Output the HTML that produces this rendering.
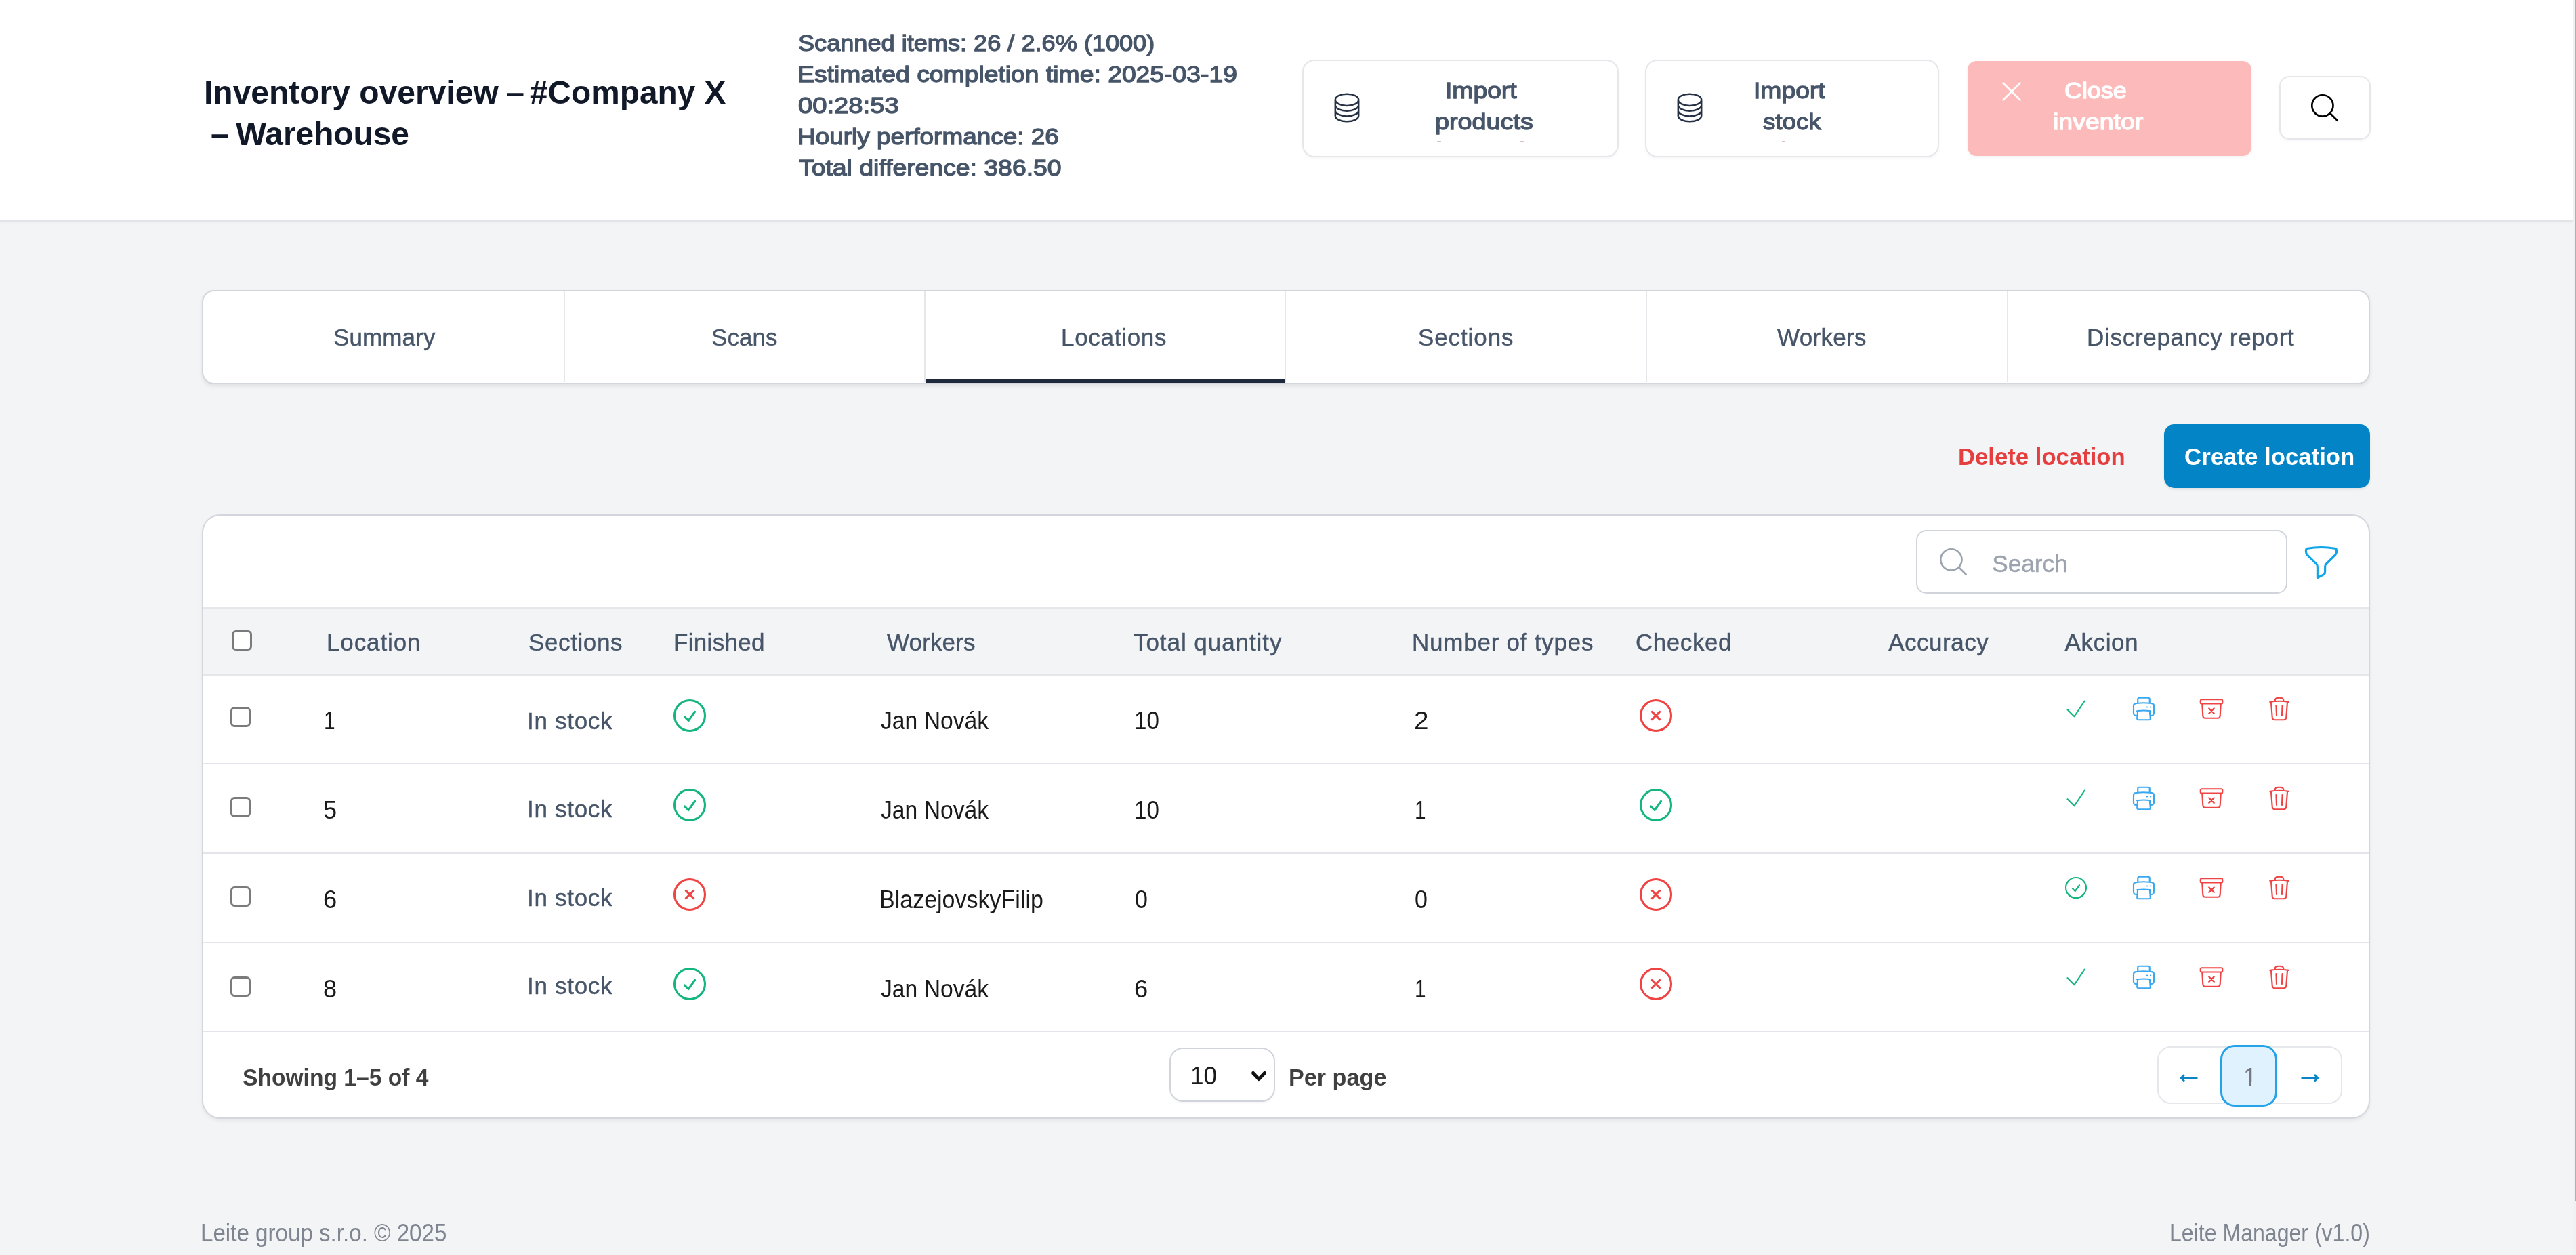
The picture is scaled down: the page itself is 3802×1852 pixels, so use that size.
<!DOCTYPE html>
<html lang="en"><head><meta charset="utf-8"><title>Inventory overview</title>
<style>
html,body{margin:0;padding:0}
body{width:3802px;height:1852px;overflow:hidden;background:#f3f4f6;position:relative;font-family:"Liberation Sans", sans-serif}
.t{position:absolute;white-space:nowrap;font-family:"Liberation Sans", sans-serif}
.tw{position:absolute;left:0;top:0;width:3802px;height:1852px;will-change:transform}
.a{position:absolute;box-sizing:border-box}
svg{position:absolute;overflow:visible}
</style></head><body>
<div class="a" style="left:0px;top:0px;width:3797px;height:327px;background:#fff;border-bottom:3px solid #e2e4ea;box-shadow:0 2px 4px rgba(0,0,0,.03)"></div>
<div class="a" style="left:3797px;top:0px;width:5px;height:1852px;background:#f1f1f1"></div>
<div class="a" style="left:3799.5px;top:0px;width:2.5px;height:1773px;background:#b0b0b0"></div>
<div class="a" style="left:1922px;top:87.5px;width:467px;height:144.5px;background:#fff;border:2.5px solid #e5e7eb;border-radius:18px;box-shadow:0 2px 4px rgba(0,0,0,.04)"></div>
<div class="a" style="left:2427.5px;top:87.5px;width:434.5px;height:144.5px;background:#fff;border:2.5px solid #e5e7eb;border-radius:18px;box-shadow:0 2px 4px rgba(0,0,0,.04)"></div>
<div class="a" style="left:2904px;top:89.5px;width:418.5px;height:140.5px;background:#fcbaba;border-radius:13px;box-shadow:0 2px 4px rgba(0,0,0,.05)"></div>
<div class="a" style="left:3363.5px;top:111.5px;width:135px;height:94.5px;background:#fff;border:2.5px solid #e5e7eb;border-radius:15px;box-shadow:0 2px 4px rgba(0,0,0,.04)"></div>
<svg style="left:1963px;top:134px" width="50" height="50" viewBox="0 0 24 24" fill="none" stroke="#263143" stroke-width="1.2" stroke-linecap="round" stroke-linejoin="round"><path d="M20.25 6.375c0 2.278-3.694 4.125-8.25 4.125S3.75 8.653 3.75 6.375m16.5 0c0-2.278-3.694-4.125-8.25-4.125S3.75 4.097 3.75 6.375m16.5 0v11.25c0 2.278-3.694 4.125-8.25 4.125s-8.25-1.847-8.25-4.125V6.375m16.5 0v3.75m-16.5-3.75v3.75m16.5 0v3.75C20.25 16.153 16.556 18 12 18s-8.25-1.847-8.25-4.125v-3.75m16.5 0c0 2.278-3.694 4.125-8.25 4.125s-8.25-1.847-8.25-4.125"/></svg>
<svg style="left:2469px;top:134px" width="50" height="50" viewBox="0 0 24 24" fill="none" stroke="#263143" stroke-width="1.2" stroke-linecap="round" stroke-linejoin="round"><path d="M20.25 6.375c0 2.278-3.694 4.125-8.25 4.125S3.75 8.653 3.75 6.375m16.5 0c0-2.278-3.694-4.125-8.25-4.125S3.75 4.097 3.75 6.375m16.5 0v11.25c0 2.278-3.694 4.125-8.25 4.125s-8.25-1.847-8.25-4.125V6.375m16.5 0v3.75m-16.5-3.75v3.75m16.5 0v3.75C20.25 16.153 16.556 18 12 18s-8.25-1.847-8.25-4.125v-3.75m16.5 0c0 2.278-3.694 4.125-8.25 4.125s-8.25-1.847-8.25-4.125"/></svg>
<svg style="left:2944px;top:110px" width="50" height="50" viewBox="0 0 24 24" fill="none" stroke="#fff" stroke-width="1.25" stroke-linecap="round" stroke-linejoin="round"><path d="M6 18 18 6M6 6l12 12"/></svg>
<svg style="left:3406px;top:134px" width="50" height="50" viewBox="0 0 24 24" fill="none" stroke="#000" stroke-width="1.3" stroke-linecap="round" stroke-linejoin="round"><path d="m21 21-5.197-5.197m0 0A7.5 7.5 0 1 0 5.196 5.196a7.5 7.5 0 0 0 10.607 10.607Z"/></svg>
<div class="a" style="left:2121px;top:207.5px;width:6px;height:1.5px;background:#d7bccb;border-radius:1px"></div>
<div class="a" style="left:2243px;top:207.5px;width:6px;height:1.5px;background:#d7bccb;border-radius:1px"></div>
<div class="a" style="left:2630px;top:207.5px;width:5px;height:1.5px;background:#d7bccb;border-radius:1px"></div>
<div class="a" style="left:297.5px;top:427.5px;width:3200.5px;height:139px;background:#fff;border:2.5px solid #d3d6dc;border-radius:18px;box-shadow:0 3px 6px rgba(0,0,0,.08)"></div>
<div class="a" style="left:832px;top:430px;width:2px;height:134px;background:#e5e7eb"></div>
<div class="a" style="left:1364px;top:430px;width:2px;height:134px;background:#e5e7eb"></div>
<div class="a" style="left:1896px;top:430px;width:2px;height:134px;background:#e5e7eb"></div>
<div class="a" style="left:2429px;top:430px;width:2px;height:134px;background:#e5e7eb"></div>
<div class="a" style="left:2962px;top:430px;width:2px;height:134px;background:#e5e7eb"></div>
<div class="a" style="left:1365.5px;top:559.5px;width:531px;height:5px;background:#1e293b"></div>
<div class="a" style="left:3194px;top:626px;width:304px;height:93.5px;background:#0284c7;border-radius:15px;box-shadow:0 2px 4px rgba(0,0,0,.08)"></div>
<div class="a" style="left:297.5px;top:759px;width:3200.5px;height:891.5px;background:#fff;border:2.5px solid #d3d6dc;border-radius:27px;box-shadow:0 3px 5px rgba(0,0,0,.06)"></div>
<div class="a" style="left:2828px;top:782px;width:548px;height:94px;background:#fff;border:2.5px solid #d1d5db;border-radius:15px"></div>
<svg style="left:2858px;top:804px" width="50" height="50" viewBox="0 0 24 24" fill="none" stroke="#9ca3af" stroke-width="1.25" stroke-linecap="round" stroke-linejoin="round"><path d="m21 21-5.197-5.197m0 0A7.5 7.5 0 1 0 5.196 5.196a7.5 7.5 0 0 0 10.607 10.607Z"/></svg>
<svg style="left:3396px;top:800px" width="60" height="60" viewBox="0 0 24 24" fill="none" stroke="#0ea5e9" stroke-width="1.25" stroke-linecap="round" stroke-linejoin="round"><path d="M12 3c2.755 0 5.455.232 8.083.678.533.09.917.556.917 1.096v1.044a2.25 2.25 0 0 1-.659 1.591l-5.432 5.432a2.25 2.25 0 0 0-.659 1.591v2.927a2.25 2.25 0 0 1-1.244 2.013L9.75 21v-6.568a2.25 2.25 0 0 0-.659-1.591L3.659 7.409A2.25 2.25 0 0 1 3 5.818V4.774c0-.54.384-1.006.917-1.096A48.32 48.32 0 0 1 12 3Z"/></svg>
<div class="a" style="left:300px;top:896px;width:3196px;height:100.5px;background:#f3f4f6;border-top:2.5px solid #e5e7eb;border-bottom:2.5px solid #e5e7eb"></div>
<div class="a" style="left:342px;top:930px;width:30px;height:30px;background:#fff;border:3px solid #7b7b7b;border-radius:6px"></div>
<div class="a" style="left:300px;top:1126px;width:3196px;height:2px;background:#e3e5ea"></div>
<div class="a" style="left:340px;top:1043px;width:30px;height:30px;background:#fff;border:3px solid #7b7b7b;border-radius:6px"></div>
<div class="a" style="left:300px;top:1258px;width:3196px;height:2px;background:#e3e5ea"></div>
<div class="a" style="left:340px;top:1175.5px;width:30px;height:30px;background:#fff;border:3px solid #7b7b7b;border-radius:6px"></div>
<div class="a" style="left:300px;top:1390px;width:3196px;height:2px;background:#e3e5ea"></div>
<div class="a" style="left:340px;top:1308px;width:30px;height:30px;background:#fff;border:3px solid #7b7b7b;border-radius:6px"></div>
<div class="a" style="left:300px;top:1521px;width:3196px;height:2px;background:#e3e5ea"></div>
<div class="a" style="left:340px;top:1440.5px;width:30px;height:30px;background:#fff;border:3px solid #7b7b7b;border-radius:6px"></div>
<svg style="left:988px;top:1026px" width="60" height="60" viewBox="0 0 24 24" fill="none" stroke="#14b57e" stroke-width="1.25" stroke-linecap="round" stroke-linejoin="round"><path d="M9 12.75 11.25 15 15 9.75M21 12a9 9 0 1 1-18 0 9 9 0 0 1 18 0Z"/></svg>
<svg style="left:2414px;top:1026px" width="60" height="60" viewBox="0 0 24 24" fill="none" stroke="#ef4444" stroke-width="1.25" stroke-linecap="round" stroke-linejoin="round"><path d="m9.75 9.75 4.5 4.5m0-4.5-4.5 4.5M21 12a9 9 0 1 1-18 0 9 9 0 0 1 18 0Z"/></svg>
<svg style="left:3043.5px;top:1025.5px" width="40" height="40" viewBox="0 0 24 24" fill="none" stroke="#14b57e" stroke-width="1.3" stroke-linecap="round" stroke-linejoin="round"><path d="m4.5 12.75 6 6 9-13.5"/></svg>
<svg style="left:3144px;top:1025.5px" width="40" height="40" viewBox="0 0 24 24" fill="none" stroke="#38a8f0" stroke-width="1.3" stroke-linecap="round" stroke-linejoin="round"><path d="M6.72 13.829c-.24.03-.48.062-.72.096m.72-.096a42.415 42.415 0 0 1 10.56 0m-10.56 0L6.34 18m10.94-4.171c.24.03.48.062.72.096m-.72-.096L17.66 18m0 0 .229 2.523a1.125 1.125 0 0 1-1.12 1.227H7.231c-.662 0-1.18-.568-1.12-1.227L6.34 18m11.318 0h1.091A2.25 2.25 0 0 0 21 15.75V9.456c0-1.081-.768-2.015-1.837-2.175a48.055 48.055 0 0 0-1.913-.247M6.34 18H5.25A2.25 2.25 0 0 1 3 15.75V9.456c0-1.081.768-2.015 1.837-2.175a48.041 48.041 0 0 1 1.913-.247m10.5 0a48.536 48.536 0 0 0-10.5 0m10.5 0V3.375c0-.621-.504-1.125-1.125-1.125h-8.25c-.621 0-1.125.504-1.125 1.125v3.659M18 10.5h.008v.008H18V10.5Zm-3 0h.008v.008H15V10.5Z"/></svg>
<svg style="left:3244px;top:1025.5px" width="40" height="40" viewBox="0 0 24 24" fill="none" stroke="#ef4444" stroke-width="1.3" stroke-linecap="round" stroke-linejoin="round"><path d="m20.25 7.5-.625 10.632a2.25 2.25 0 0 1-2.247 2.118H6.622a2.25 2.25 0 0 1-2.247-2.118L3.75 7.5m6 4.125 2.25 2.25m0 0 2.25 2.25M12 13.875l2.25-2.25M12 13.875l-2.25 2.25M3.375 7.5h17.25c.621 0 1.125-.504 1.125-1.125v-1.5c0-.621-.504-1.125-1.125-1.125H3.375c-.621 0-1.125.504-1.125 1.125v1.5c0 .621.504 1.125 1.125 1.125Z"/></svg>
<svg style="left:3344px;top:1025.5px" width="40" height="40" viewBox="0 0 24 24" fill="none" stroke="#ef4444" stroke-width="1.3" stroke-linecap="round" stroke-linejoin="round"><path d="m14.74 9-.346 9m-4.788 0L9.26 9m9.968-3.21c.342.052.682.107 1.022.166m-1.022-.165L18.16 19.673a2.25 2.25 0 0 1-2.244 2.077H8.084a2.25 2.25 0 0 1-2.244-2.077L4.772 5.79m14.456 0a48.108 48.108 0 0 0-3.478-.397m-12 .562c.34-.059.68-.114 1.022-.165m0 0a48.11 48.11 0 0 1 3.478-.397m7.5 0v-.916c0-1.18-.91-2.164-2.09-2.201a51.964 51.964 0 0 0-3.32 0c-1.18.037-2.09 1.022-2.09 2.201v.916m7.5 0a48.667 48.667 0 0 0-7.5 0"/></svg>
<svg style="left:988px;top:1158px" width="60" height="60" viewBox="0 0 24 24" fill="none" stroke="#14b57e" stroke-width="1.25" stroke-linecap="round" stroke-linejoin="round"><path d="M9 12.75 11.25 15 15 9.75M21 12a9 9 0 1 1-18 0 9 9 0 0 1 18 0Z"/></svg>
<svg style="left:2414px;top:1158px" width="60" height="60" viewBox="0 0 24 24" fill="none" stroke="#14b57e" stroke-width="1.25" stroke-linecap="round" stroke-linejoin="round"><path d="M9 12.75 11.25 15 15 9.75M21 12a9 9 0 1 1-18 0 9 9 0 0 1 18 0Z"/></svg>
<svg style="left:3043.5px;top:1157.5px" width="40" height="40" viewBox="0 0 24 24" fill="none" stroke="#14b57e" stroke-width="1.3" stroke-linecap="round" stroke-linejoin="round"><path d="m4.5 12.75 6 6 9-13.5"/></svg>
<svg style="left:3144px;top:1157.5px" width="40" height="40" viewBox="0 0 24 24" fill="none" stroke="#38a8f0" stroke-width="1.3" stroke-linecap="round" stroke-linejoin="round"><path d="M6.72 13.829c-.24.03-.48.062-.72.096m.72-.096a42.415 42.415 0 0 1 10.56 0m-10.56 0L6.34 18m10.94-4.171c.24.03.48.062.72.096m-.72-.096L17.66 18m0 0 .229 2.523a1.125 1.125 0 0 1-1.12 1.227H7.231c-.662 0-1.18-.568-1.12-1.227L6.34 18m11.318 0h1.091A2.25 2.25 0 0 0 21 15.75V9.456c0-1.081-.768-2.015-1.837-2.175a48.055 48.055 0 0 0-1.913-.247M6.34 18H5.25A2.25 2.25 0 0 1 3 15.75V9.456c0-1.081.768-2.015 1.837-2.175a48.041 48.041 0 0 1 1.913-.247m10.5 0a48.536 48.536 0 0 0-10.5 0m10.5 0V3.375c0-.621-.504-1.125-1.125-1.125h-8.25c-.621 0-1.125.504-1.125 1.125v3.659M18 10.5h.008v.008H18V10.5Zm-3 0h.008v.008H15V10.5Z"/></svg>
<svg style="left:3244px;top:1157.5px" width="40" height="40" viewBox="0 0 24 24" fill="none" stroke="#ef4444" stroke-width="1.3" stroke-linecap="round" stroke-linejoin="round"><path d="m20.25 7.5-.625 10.632a2.25 2.25 0 0 1-2.247 2.118H6.622a2.25 2.25 0 0 1-2.247-2.118L3.75 7.5m6 4.125 2.25 2.25m0 0 2.25 2.25M12 13.875l2.25-2.25M12 13.875l-2.25 2.25M3.375 7.5h17.25c.621 0 1.125-.504 1.125-1.125v-1.5c0-.621-.504-1.125-1.125-1.125H3.375c-.621 0-1.125.504-1.125 1.125v1.5c0 .621.504 1.125 1.125 1.125Z"/></svg>
<svg style="left:3344px;top:1157.5px" width="40" height="40" viewBox="0 0 24 24" fill="none" stroke="#ef4444" stroke-width="1.3" stroke-linecap="round" stroke-linejoin="round"><path d="m14.74 9-.346 9m-4.788 0L9.26 9m9.968-3.21c.342.052.682.107 1.022.166m-1.022-.165L18.16 19.673a2.25 2.25 0 0 1-2.244 2.077H8.084a2.25 2.25 0 0 1-2.244-2.077L4.772 5.79m14.456 0a48.108 48.108 0 0 0-3.478-.397m-12 .562c.34-.059.68-.114 1.022-.165m0 0a48.11 48.11 0 0 1 3.478-.397m7.5 0v-.916c0-1.18-.91-2.164-2.09-2.201a51.964 51.964 0 0 0-3.32 0c-1.18.037-2.09 1.022-2.09 2.201v.916m7.5 0a48.667 48.667 0 0 0-7.5 0"/></svg>
<svg style="left:988px;top:1290px" width="60" height="60" viewBox="0 0 24 24" fill="none" stroke="#ef4444" stroke-width="1.25" stroke-linecap="round" stroke-linejoin="round"><path d="m9.75 9.75 4.5 4.5m0-4.5-4.5 4.5M21 12a9 9 0 1 1-18 0 9 9 0 0 1 18 0Z"/></svg>
<svg style="left:2414px;top:1290px" width="60" height="60" viewBox="0 0 24 24" fill="none" stroke="#ef4444" stroke-width="1.25" stroke-linecap="round" stroke-linejoin="round"><path d="m9.75 9.75 4.5 4.5m0-4.5-4.5 4.5M21 12a9 9 0 1 1-18 0 9 9 0 0 1 18 0Z"/></svg>
<svg style="left:3043.5px;top:1289.5px" width="40" height="40" viewBox="0 0 24 24" fill="none" stroke="#14b57e" stroke-width="1.3" stroke-linecap="round" stroke-linejoin="round"><path d="M9 12.75 11.25 15 15 9.75M21 12a9 9 0 1 1-18 0 9 9 0 0 1 18 0Z"/></svg>
<svg style="left:3144px;top:1289.5px" width="40" height="40" viewBox="0 0 24 24" fill="none" stroke="#38a8f0" stroke-width="1.3" stroke-linecap="round" stroke-linejoin="round"><path d="M6.72 13.829c-.24.03-.48.062-.72.096m.72-.096a42.415 42.415 0 0 1 10.56 0m-10.56 0L6.34 18m10.94-4.171c.24.03.48.062.72.096m-.72-.096L17.66 18m0 0 .229 2.523a1.125 1.125 0 0 1-1.12 1.227H7.231c-.662 0-1.18-.568-1.12-1.227L6.34 18m11.318 0h1.091A2.25 2.25 0 0 0 21 15.75V9.456c0-1.081-.768-2.015-1.837-2.175a48.055 48.055 0 0 0-1.913-.247M6.34 18H5.25A2.25 2.25 0 0 1 3 15.75V9.456c0-1.081.768-2.015 1.837-2.175a48.041 48.041 0 0 1 1.913-.247m10.5 0a48.536 48.536 0 0 0-10.5 0m10.5 0V3.375c0-.621-.504-1.125-1.125-1.125h-8.25c-.621 0-1.125.504-1.125 1.125v3.659M18 10.5h.008v.008H18V10.5Zm-3 0h.008v.008H15V10.5Z"/></svg>
<svg style="left:3244px;top:1289.5px" width="40" height="40" viewBox="0 0 24 24" fill="none" stroke="#ef4444" stroke-width="1.3" stroke-linecap="round" stroke-linejoin="round"><path d="m20.25 7.5-.625 10.632a2.25 2.25 0 0 1-2.247 2.118H6.622a2.25 2.25 0 0 1-2.247-2.118L3.75 7.5m6 4.125 2.25 2.25m0 0 2.25 2.25M12 13.875l2.25-2.25M12 13.875l-2.25 2.25M3.375 7.5h17.25c.621 0 1.125-.504 1.125-1.125v-1.5c0-.621-.504-1.125-1.125-1.125H3.375c-.621 0-1.125.504-1.125 1.125v1.5c0 .621.504 1.125 1.125 1.125Z"/></svg>
<svg style="left:3344px;top:1289.5px" width="40" height="40" viewBox="0 0 24 24" fill="none" stroke="#ef4444" stroke-width="1.3" stroke-linecap="round" stroke-linejoin="round"><path d="m14.74 9-.346 9m-4.788 0L9.26 9m9.968-3.21c.342.052.682.107 1.022.166m-1.022-.165L18.16 19.673a2.25 2.25 0 0 1-2.244 2.077H8.084a2.25 2.25 0 0 1-2.244-2.077L4.772 5.79m14.456 0a48.108 48.108 0 0 0-3.478-.397m-12 .562c.34-.059.68-.114 1.022-.165m0 0a48.11 48.11 0 0 1 3.478-.397m7.5 0v-.916c0-1.18-.91-2.164-2.09-2.201a51.964 51.964 0 0 0-3.32 0c-1.18.037-2.09 1.022-2.09 2.201v.916m7.5 0a48.667 48.667 0 0 0-7.5 0"/></svg>
<svg style="left:988px;top:1422px" width="60" height="60" viewBox="0 0 24 24" fill="none" stroke="#14b57e" stroke-width="1.25" stroke-linecap="round" stroke-linejoin="round"><path d="M9 12.75 11.25 15 15 9.75M21 12a9 9 0 1 1-18 0 9 9 0 0 1 18 0Z"/></svg>
<svg style="left:2414px;top:1422px" width="60" height="60" viewBox="0 0 24 24" fill="none" stroke="#ef4444" stroke-width="1.25" stroke-linecap="round" stroke-linejoin="round"><path d="m9.75 9.75 4.5 4.5m0-4.5-4.5 4.5M21 12a9 9 0 1 1-18 0 9 9 0 0 1 18 0Z"/></svg>
<svg style="left:3043.5px;top:1421.5px" width="40" height="40" viewBox="0 0 24 24" fill="none" stroke="#14b57e" stroke-width="1.3" stroke-linecap="round" stroke-linejoin="round"><path d="m4.5 12.75 6 6 9-13.5"/></svg>
<svg style="left:3144px;top:1421.5px" width="40" height="40" viewBox="0 0 24 24" fill="none" stroke="#38a8f0" stroke-width="1.3" stroke-linecap="round" stroke-linejoin="round"><path d="M6.72 13.829c-.24.03-.48.062-.72.096m.72-.096a42.415 42.415 0 0 1 10.56 0m-10.56 0L6.34 18m10.94-4.171c.24.03.48.062.72.096m-.72-.096L17.66 18m0 0 .229 2.523a1.125 1.125 0 0 1-1.12 1.227H7.231c-.662 0-1.18-.568-1.12-1.227L6.34 18m11.318 0h1.091A2.25 2.25 0 0 0 21 15.75V9.456c0-1.081-.768-2.015-1.837-2.175a48.055 48.055 0 0 0-1.913-.247M6.34 18H5.25A2.25 2.25 0 0 1 3 15.75V9.456c0-1.081.768-2.015 1.837-2.175a48.041 48.041 0 0 1 1.913-.247m10.5 0a48.536 48.536 0 0 0-10.5 0m10.5 0V3.375c0-.621-.504-1.125-1.125-1.125h-8.25c-.621 0-1.125.504-1.125 1.125v3.659M18 10.5h.008v.008H18V10.5Zm-3 0h.008v.008H15V10.5Z"/></svg>
<svg style="left:3244px;top:1421.5px" width="40" height="40" viewBox="0 0 24 24" fill="none" stroke="#ef4444" stroke-width="1.3" stroke-linecap="round" stroke-linejoin="round"><path d="m20.25 7.5-.625 10.632a2.25 2.25 0 0 1-2.247 2.118H6.622a2.25 2.25 0 0 1-2.247-2.118L3.75 7.5m6 4.125 2.25 2.25m0 0 2.25 2.25M12 13.875l2.25-2.25M12 13.875l-2.25 2.25M3.375 7.5h17.25c.621 0 1.125-.504 1.125-1.125v-1.5c0-.621-.504-1.125-1.125-1.125H3.375c-.621 0-1.125.504-1.125 1.125v1.5c0 .621.504 1.125 1.125 1.125Z"/></svg>
<svg style="left:3344px;top:1421.5px" width="40" height="40" viewBox="0 0 24 24" fill="none" stroke="#ef4444" stroke-width="1.3" stroke-linecap="round" stroke-linejoin="round"><path d="m14.74 9-.346 9m-4.788 0L9.26 9m9.968-3.21c.342.052.682.107 1.022.166m-1.022-.165L18.16 19.673a2.25 2.25 0 0 1-2.244 2.077H8.084a2.25 2.25 0 0 1-2.244-2.077L4.772 5.79m14.456 0a48.108 48.108 0 0 0-3.478-.397m-12 .562c.34-.059.68-.114 1.022-.165m0 0a48.11 48.11 0 0 1 3.478-.397m7.5 0v-.916c0-1.18-.91-2.164-2.09-2.201a51.964 51.964 0 0 0-3.32 0c-1.18.037-2.09 1.022-2.09 2.201v.916m7.5 0a48.667 48.667 0 0 0-7.5 0"/></svg>
<div class="a" style="left:1726px;top:1546px;width:156px;height:79.5px;background:#fff;border:2.5px solid #d1d5db;border-radius:20px;box-shadow:0 2px 3px rgba(0,0,0,.04)"></div>
<svg style="left:1840px;top:1575px" width="36" height="26" viewBox="0 0 36 26" fill="none" stroke="#111" stroke-width="5" stroke-linecap="round" stroke-linejoin="round"><path d="M9.5 8.5 18 17.5 26.5 8.5"/></svg>
<div class="a" style="left:3183.5px;top:1543.5px;width:273px;height:85px;background:#fff;border:2.5px solid #e5e7eb;border-radius:20px"></div>
<div class="a" style="left:3277px;top:1541.5px;width:84px;height:91px;background:#e0f2fe;border:3px solid #25a3e8;border-radius:21px"></div>
<svg style="left:3210px;top:1578px" width="40" height="26" viewBox="0 0 40 26" fill="none" stroke="#0b84c6" stroke-width="2.7" stroke-linecap="butt" stroke-linejoin="miter"><path d="M33.5 12.8H9M14 8 9 12.8 14 17.6"/></svg>
<svg style="left:3390px;top:1578px" width="40" height="26" viewBox="0 0 40 26" fill="none" stroke="#0b84c6" stroke-width="2.7" stroke-linecap="butt" stroke-linejoin="miter"><path d="M6.5 12.8H31M26 8 31 12.8 26 17.6"/></svg>
<div class="tw">
<div class="t" style="left:301.04px;top:111.50px;font-size:48.5px;line-height:48.5px;font-weight:700;color:#111827;letter-spacing:0.000px;transform:scaleX(0.9894);transform-origin:0 0;">Inventory overview</div>
<div class="t" style="left:747.00px;top:111.50px;font-size:48.5px;line-height:48.5px;font-weight:700;color:#111827;letter-spacing:0.000px;">–</div>
<div class="t" style="left:782.00px;top:111.50px;font-size:48.5px;line-height:48.5px;font-weight:700;color:#111827;letter-spacing:0.000px;transform:scaleX(0.9849);transform-origin:0 0;">#Company X</div>
<div class="t" style="left:311.00px;top:173.00px;font-size:48.5px;line-height:48.5px;font-weight:700;color:#111827;letter-spacing:0.000px;">–</div>
<div class="t" style="left:348.00px;top:173.00px;font-size:48.5px;line-height:48.5px;font-weight:700;color:#111827;letter-spacing:0.000px;transform:scaleX(0.9859);transform-origin:0 0;">Warehouse</div>
<div class="t" style="left:1177.91px;top:47.05px;font-size:33.3px;line-height:33.3px;font-weight:400;color:#475569;letter-spacing:0.000px;transform:scaleX(1.0852);transform-origin:0 0;-webkit-text-stroke:1.3px #475569;">Scanned items: 26 / 2.6% (1000)</div>
<div class="t" style="left:1176.76px;top:93.05px;font-size:33.3px;line-height:33.3px;font-weight:400;color:#475569;letter-spacing:0.000px;transform:scaleX(1.1202);transform-origin:0 0;-webkit-text-stroke:1.3px #475569;">Estimated completion time: 2025-03-19</div>
<div class="t" style="left:1177.85px;top:139.05px;font-size:33.3px;line-height:33.3px;font-weight:400;color:#475569;letter-spacing:0.000px;transform:scaleX(1.1476);transform-origin:0 0;-webkit-text-stroke:1.3px #475569;">00:28:53</div>
<div class="t" style="left:1176.78px;top:185.05px;font-size:33.3px;line-height:33.3px;font-weight:400;color:#475569;letter-spacing:0.000px;transform:scaleX(1.1088);transform-origin:0 0;-webkit-text-stroke:1.3px #475569;">Hourly performance: 26</div>
<div class="t" style="left:1179.00px;top:231.05px;font-size:33.3px;line-height:33.3px;font-weight:400;color:#475569;letter-spacing:0.000px;transform:scaleX(1.1216);transform-origin:0 0;-webkit-text-stroke:1.3px #475569;">Total difference: 386.50</div>
<div class="t" style="left:2132.61px;top:117.35px;font-size:33.3px;line-height:33.3px;font-weight:400;color:#475569;letter-spacing:0.000px;transform:scaleX(1.1196);transform-origin:0 0;-webkit-text-stroke:1.3px #475569;">Import</div>
<div class="t" style="left:2117.73px;top:163.35px;font-size:33.3px;line-height:33.3px;font-weight:400;color:#475569;letter-spacing:0.000px;transform:scaleX(1.1339);transform-origin:0 0;-webkit-text-stroke:1.3px #475569;">products</div>
<div class="t" style="left:2587.61px;top:117.35px;font-size:33.3px;line-height:33.3px;font-weight:400;color:#475569;letter-spacing:0.000px;transform:scaleX(1.1196);transform-origin:0 0;-webkit-text-stroke:1.3px #475569;">Import</div>
<div class="t" style="left:2602.00px;top:163.35px;font-size:33.3px;line-height:33.3px;font-weight:400;color:#475569;letter-spacing:0.000px;transform:scaleX(1.1017);transform-origin:0 0;-webkit-text-stroke:1.3px #475569;">stock</div>
<div class="t" style="left:3046.93px;top:117.35px;font-size:33.3px;line-height:33.3px;font-weight:400;color:#fff;letter-spacing:0.000px;transform:scaleX(1.0765);transform-origin:0 0;-webkit-text-stroke:1.3px #fff;">Close</div>
<div class="t" style="left:3029.75px;top:162.85px;font-size:33.3px;line-height:33.3px;font-weight:400;color:#fff;letter-spacing:0.000px;transform:scaleX(1.1257);transform-origin:0 0;-webkit-text-stroke:1.3px #fff;">inventor</div>
<div class="t" style="left:492.00px;top:479.77px;font-size:35px;line-height:35px;font-weight:400;color:#475569;letter-spacing:0.126px;-webkit-text-stroke:0.45px #475569;">Summary</div>
<div class="t" style="left:1050.00px;top:479.77px;font-size:35px;line-height:35px;font-weight:400;color:#475569;letter-spacing:0.056px;-webkit-text-stroke:0.45px #475569;">Scans</div>
<div class="t" style="left:1566.00px;top:479.77px;font-size:35px;line-height:35px;font-weight:400;color:#475569;letter-spacing:0.709px;-webkit-text-stroke:0.45px #475569;">Locations</div>
<div class="t" style="left:2093.00px;top:479.77px;font-size:35px;line-height:35px;font-weight:400;color:#475569;letter-spacing:0.894px;-webkit-text-stroke:0.45px #475569;">Sections</div>
<div class="t" style="left:2623.00px;top:479.77px;font-size:35px;line-height:35px;font-weight:400;color:#475569;letter-spacing:0.309px;-webkit-text-stroke:0.45px #475569;">Workers</div>
<div class="t" style="left:3080.00px;top:479.77px;font-size:35px;line-height:35px;font-weight:400;color:#475569;letter-spacing:0.706px;-webkit-text-stroke:0.45px #475569;">Discrepancy report</div>
<div class="t" style="left:2890.22px;top:656.20px;font-size:35px;line-height:35px;font-weight:700;color:#e53e3e;letter-spacing:0.000px;transform:scaleX(0.9912);transform-origin:0 0;">Delete location</div>
<div class="t" style="left:3224.01px;top:656.20px;font-size:35px;line-height:35px;font-weight:700;color:#fff;letter-spacing:0.000px;transform:scaleX(0.9942);transform-origin:0 0;">Create location</div>
<div class="t" style="left:2940.20px;top:813.77px;font-size:35.2px;line-height:35.2px;font-weight:400;color:#9ca3af;letter-spacing:-0.024px;-webkit-text-stroke:0.45px #9ca3af;">Search</div>
<div class="t" style="left:482.00px;top:929.77px;font-size:35px;line-height:35px;font-weight:400;color:#475569;letter-spacing:0.877px;-webkit-text-stroke:0.45px #475569;">Location</div>
<div class="t" style="left:780.00px;top:929.77px;font-size:35px;line-height:35px;font-weight:400;color:#475569;letter-spacing:0.608px;-webkit-text-stroke:0.45px #475569;">Sections</div>
<div class="t" style="left:994.00px;top:929.77px;font-size:35px;line-height:35px;font-weight:400;color:#475569;letter-spacing:0.310px;-webkit-text-stroke:0.45px #475569;">Finished</div>
<div class="t" style="left:1309.00px;top:929.77px;font-size:35px;line-height:35px;font-weight:400;color:#475569;letter-spacing:0.143px;-webkit-text-stroke:0.45px #475569;">Workers</div>
<div class="t" style="left:1673.00px;top:929.77px;font-size:35px;line-height:35px;font-weight:400;color:#475569;letter-spacing:0.943px;-webkit-text-stroke:0.45px #475569;">Total quantity</div>
<div class="t" style="left:2084.00px;top:929.77px;font-size:35px;line-height:35px;font-weight:400;color:#475569;letter-spacing:0.766px;-webkit-text-stroke:0.45px #475569;">Number of types</div>
<div class="t" style="left:2414.00px;top:929.77px;font-size:35px;line-height:35px;font-weight:400;color:#475569;letter-spacing:0.555px;-webkit-text-stroke:0.45px #475569;">Checked</div>
<div class="t" style="left:2787.20px;top:929.77px;font-size:35px;line-height:35px;font-weight:400;color:#475569;letter-spacing:0.510px;-webkit-text-stroke:0.45px #475569;">Accuracy</div>
<div class="t" style="left:3047.60px;top:929.77px;font-size:35px;line-height:35px;font-weight:400;color:#475569;letter-spacing:0.563px;-webkit-text-stroke:0.45px #475569;">Akcion</div>
<div class="t" style="left:478.47px;top:1046.00px;font-size:36px;line-height:36px;font-weight:400;color:#1a1a1a;letter-spacing:0.000px;transform:scaleX(0.8284);transform-origin:0 0;">1</div>
<div class="t" style="left:778.00px;top:1045.58px;font-size:35px;line-height:35px;font-weight:400;color:#475569;letter-spacing:0.700px;-webkit-text-stroke:0.45px #475569;">In stock</div>
<div class="t" style="left:1300.00px;top:1046.00px;font-size:36px;line-height:36px;font-weight:400;color:#1a1a1a;letter-spacing:0.000px;transform:scaleX(0.9354);transform-origin:0 0;">Jan Novák</div>
<div class="t" style="left:1674.22px;top:1046.00px;font-size:36px;line-height:36px;font-weight:400;color:#1a1a1a;letter-spacing:0.000px;transform:scaleX(0.9201);transform-origin:0 0;">10</div>
<div class="t" style="left:2087.06px;top:1046.00px;font-size:36px;line-height:36px;font-weight:400;color:#1a1a1a;letter-spacing:0.000px;transform:scaleX(1.0741);transform-origin:0 0;">2</div>
<div class="t" style="left:477.08px;top:1177.80px;font-size:36px;line-height:36px;font-weight:400;color:#1a1a1a;letter-spacing:0.000px;transform:scaleX(1.0053);transform-origin:0 0;">5</div>
<div class="t" style="left:778.00px;top:1175.98px;font-size:35px;line-height:35px;font-weight:400;color:#475569;letter-spacing:0.700px;-webkit-text-stroke:0.45px #475569;">In stock</div>
<div class="t" style="left:1300.00px;top:1177.80px;font-size:36px;line-height:36px;font-weight:400;color:#1a1a1a;letter-spacing:0.000px;transform:scaleX(0.9354);transform-origin:0 0;">Jan Novák</div>
<div class="t" style="left:1674.22px;top:1177.80px;font-size:36px;line-height:36px;font-weight:400;color:#1a1a1a;letter-spacing:0.000px;transform:scaleX(0.9201);transform-origin:0 0;">10</div>
<div class="t" style="left:2088.41px;top:1177.80px;font-size:36px;line-height:36px;font-weight:400;color:#1a1a1a;letter-spacing:0.000px;transform:scaleX(0.8258);transform-origin:0 0;">1</div>
<div class="t" style="left:477.08px;top:1309.60px;font-size:36px;line-height:36px;font-weight:400;color:#1a1a1a;letter-spacing:0.000px;transform:scaleX(1.0093);transform-origin:0 0;">6</div>
<div class="t" style="left:778.00px;top:1306.78px;font-size:35px;line-height:35px;font-weight:400;color:#475569;letter-spacing:0.700px;-webkit-text-stroke:0.45px #475569;">In stock</div>
<div class="t" style="left:1298.13px;top:1309.60px;font-size:36px;line-height:36px;font-weight:400;color:#1a1a1a;letter-spacing:0.000px;transform:scaleX(0.9445);transform-origin:0 0;">BlazejovskyFilip</div>
<div class="t" style="left:1675.06px;top:1309.60px;font-size:36px;line-height:36px;font-weight:400;color:#1a1a1a;letter-spacing:0.000px;transform:scaleX(0.9444);transform-origin:0 0;">0</div>
<div class="t" style="left:2088.06px;top:1309.60px;font-size:36px;line-height:36px;font-weight:400;color:#1a1a1a;letter-spacing:0.000px;transform:scaleX(0.9444);transform-origin:0 0;">0</div>
<div class="t" style="left:477.08px;top:1441.60px;font-size:36px;line-height:36px;font-weight:400;color:#1a1a1a;letter-spacing:0.000px;transform:scaleX(1.0053);transform-origin:0 0;">8</div>
<div class="t" style="left:778.00px;top:1436.58px;font-size:35px;line-height:35px;font-weight:400;color:#475569;letter-spacing:0.700px;-webkit-text-stroke:0.45px #475569;">In stock</div>
<div class="t" style="left:1300.00px;top:1441.60px;font-size:36px;line-height:36px;font-weight:400;color:#1a1a1a;letter-spacing:0.000px;transform:scaleX(0.9354);transform-origin:0 0;">Jan Novák</div>
<div class="t" style="left:1674.06px;top:1441.60px;font-size:36px;line-height:36px;font-weight:400;color:#1a1a1a;letter-spacing:0.000px;transform:scaleX(1.0109);transform-origin:0 0;">6</div>
<div class="t" style="left:2088.41px;top:1441.60px;font-size:36px;line-height:36px;font-weight:400;color:#1a1a1a;letter-spacing:0.000px;transform:scaleX(0.8258);transform-origin:0 0;">1</div>
<div class="t" style="left:358.04px;top:1572.00px;font-size:35px;line-height:35px;font-weight:700;color:#404040;letter-spacing:0.000px;transform:scaleX(0.9600);transform-origin:0 0;">Showing 1–5 of 4</div>
<div class="t" style="left:1757.14px;top:1569.50px;font-size:36px;line-height:36px;font-weight:400;color:#1a1a1a;letter-spacing:0.000px;transform:scaleX(0.9745);transform-origin:0 0;">10</div>
<div class="t" style="left:1902.05px;top:1572.00px;font-size:35px;line-height:35px;font-weight:700;color:#404040;letter-spacing:0.000px;transform:scaleX(0.9768);transform-origin:0 0;">Per page</div>
<div class="t" style="left:3311.00px;top:1571.50px;font-size:36px;line-height:36px;font-weight:400;color:#74777f;letter-spacing:0.000px;">1</div>
<div class="t" style="left:296.35px;top:1801.00px;font-size:37.5px;line-height:37.5px;font-weight:400;color:#7f8590;letter-spacing:0.000px;transform:scaleX(0.8837);transform-origin:0 0;">Leite group s.r.o. © 2025</div>
<div class="t" style="left:3202.45px;top:1801.00px;font-size:37.5px;line-height:37.5px;font-weight:400;color:#7f8590;letter-spacing:0.000px;transform:scaleX(0.8550);transform-origin:0 0;">Leite Manager (v1.0)</div>
<div class="a" style="left:3309px;top:1597px;width:10.4px;height:7px;background:#e0f2fe"></div><div class="a" style="left:3323.3px;top:1597px;width:9px;height:7px;background:#e0f2fe"></div>
</div>
</body></html>
